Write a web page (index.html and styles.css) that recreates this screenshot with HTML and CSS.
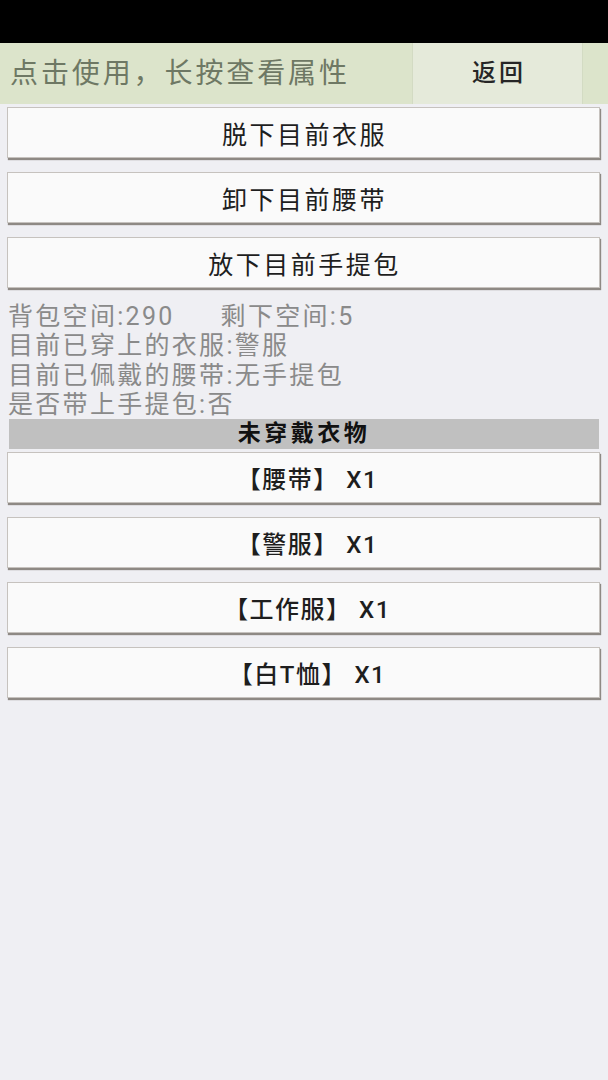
FILE: index.html
```html
<!DOCTYPE html>
<html lang="zh">
<head>
<meta charset="utf-8">
<title>衣物</title>
<link rel="stylesheet" href="styles.css">
</head>
<body>
<div class="status"></div>
<div class="header">
  <div class="hint">点击使用，长按查看属性</div>
  <div class="back">返回</div>
  <div class="tail"></div>
</div>
<div class="content">
  <div class="btn">脱下目前衣服</div>
  <div class="btn">卸下目前腰带</div>
  <div class="btn">放下目前手提包</div>
  <div class="info">
    <div class="line"><span>背包空间:290</span><span class="gap">剩下空间:5</span></div>
    <div class="line">目前已穿上的衣服:警服</div>
    <div class="line">目前已佩戴的腰带:无手提包</div>
    <div class="line">是否带上手提包:否</div>
  </div>
  <div class="section">未穿戴衣物</div>
  <div class="items">
    <div class="btn item">【腰带】 X1</div>
    <div class="btn item">【警服】 X1</div>
    <div class="btn item">【工作服】 X1</div>
    <div class="btn item">【白T恤】 X1</div>
  </div>
</div>
</body>
</html>
```

FILE: styles.css
```css
html, body {
  margin: 0;
  padding: 0;
}
body {
  width: 608px;
  height: 1080px;
  background: #efeff3;
  font-family: "Roboto", "Noto Sans CJK SC", sans-serif;
  overflow: hidden;
}
.status {
  height: 43px;
  background: #000;
}
.header {
  height: 61px;
  display: flex;
  background: #dce4cb;
}
.hint {
  width: 412px;
  box-sizing: border-box;
  padding-left: 10px;
  font-size: 28px;
  letter-spacing: 2.9px;
  line-height: 61px;
  color: #6e7864;
  white-space: nowrap;
  overflow: hidden;
}
.back {
  width: 171px;
  box-sizing: border-box;
  background: #e5eada;
  border-left: 1px solid #d3dbc3;
  border-right: 1px solid #d3dbc3;
  text-align: center;
  font-size: 24px;
  letter-spacing: 3px;
  line-height: 61px;
  color: #262626;
  font-weight: 500;
  padding-left: 3px;
}
.tail {
  flex: 1;
}
.content {
  display: flex;
  flex-direction: column;
  padding-top: 3px;
}
.btn {
  height: 51px;
  box-sizing: border-box;
  margin: 0 8px 14px 7px;
  background: #fafafa;
  border: 1px solid #c6c2be;
  box-shadow: 1px 2px 1px #8e8984;
  display: flex;
  align-items: center;
  justify-content: center;
  font-size: 25px;
  letter-spacing: 2.5px;
  color: #1e1e1e;
  padding-left: 2px;
}
.info {
  padding-left: 8px;
  color: #8a8a8a;
  font-size: 25px;
  letter-spacing: 2.3px;
}
.line {
  height: 29.3px;
  line-height: 29.3px;
  white-space: nowrap;
}
.gap {
  margin-left: 46px;
}
.section {
  margin: 0 9px;
  height: 30px;
  line-height: 30px;
  background: #c0c0c0;
  text-align: center;
  font-size: 23px;
  font-weight: bold;
  letter-spacing: 3.5px;
  color: #111;
}
.items {
  display: flex;
  flex-direction: column;
  padding-top: 3px;
}
.item {
  font-size: 24px;
  letter-spacing: 1.5px;
  font-weight: 500;
  padding-left: 8px;
}
```
